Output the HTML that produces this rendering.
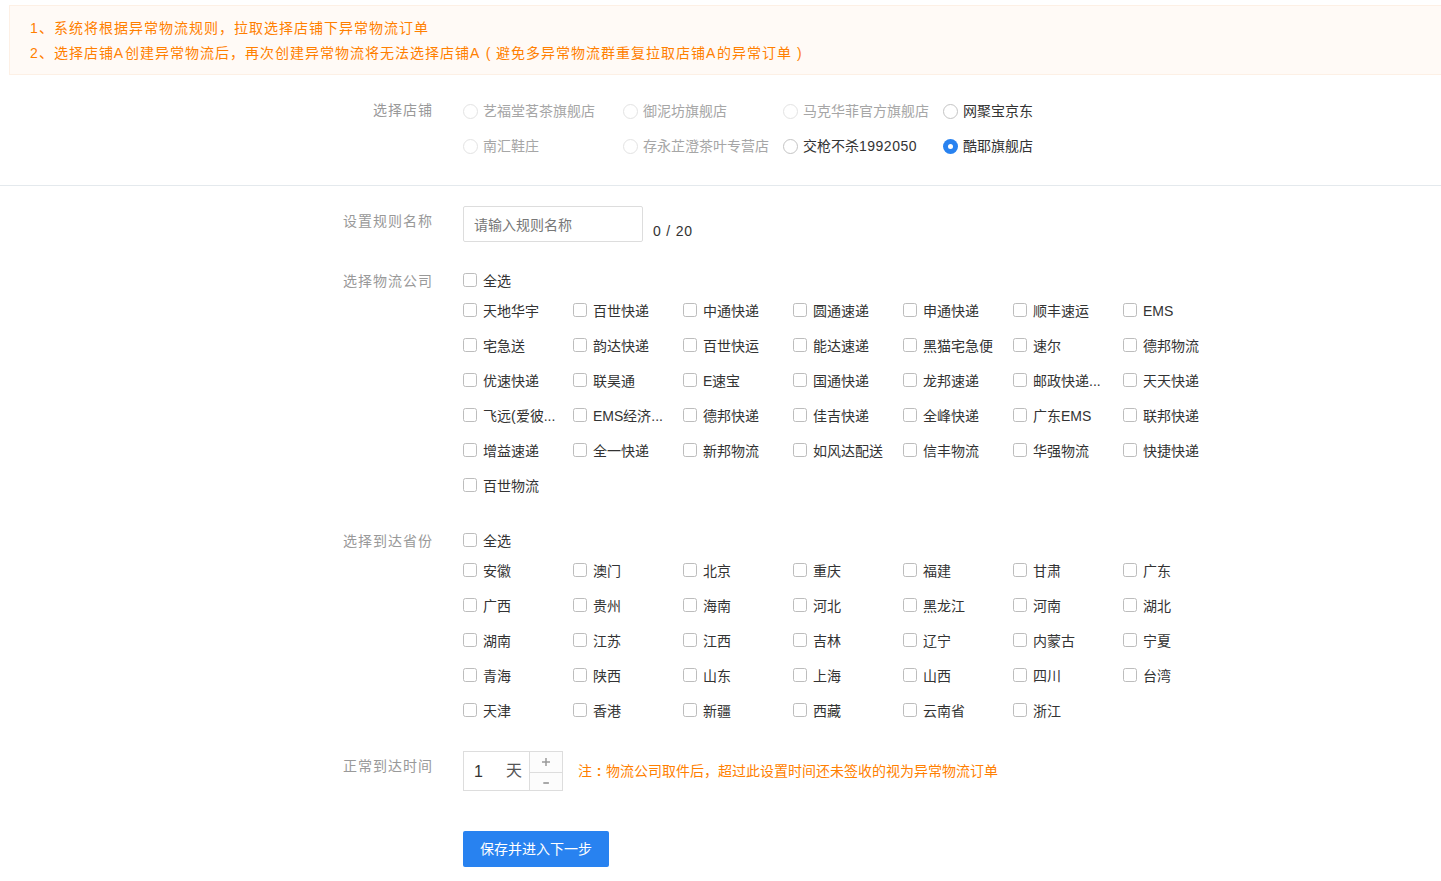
<!DOCTYPE html>
<html lang="zh-CN">
<head>
<meta charset="utf-8">
<title>异常物流规则</title>
<style>
html,body{margin:0;padding:0;}
body{width:1441px;height:881px;position:relative;overflow:hidden;background:#fff;
 font-family:"Liberation Sans",sans-serif;font-size:14px;color:#333;}
.abs{position:absolute;white-space:nowrap;}
.tip{position:absolute;left:9px;top:5px;width:1440px;height:68px;border:1px solid #fdf0e5;background:#fffaf6;}
.tip div{position:absolute;left:20px;height:25px;line-height:25px;letter-spacing:1px;color:#ff7f00;white-space:nowrap;}
.tip u{text-decoration:none;letter-spacing:1.8px;}
.tip b{display:inline-block;width:14px;text-align:center;font-weight:normal;letter-spacing:0;margin-right:1px;}
.hr{position:absolute;left:0;top:185px;width:1441px;height:1px;background:#e4e9ed;}
.lab{position:absolute;left:233px;width:200px;letter-spacing:1px;text-align:right;height:20px;line-height:20px;color:#999;white-space:nowrap;}
.it{position:absolute;height:20px;line-height:20px;white-space:nowrap;}
.it input{-webkit-appearance:none;appearance:none;outline:none;margin:0;padding:0;display:block;position:absolute;left:0;top:2px;width:14px;height:14px;box-sizing:border-box;border:1px solid #bdbdbd;border-radius:2.5px;background:#fff;}
.it span{position:absolute;left:20px;top:0px;}
.rd input{top:3px;width:15px;height:15px;border-radius:50%;border-color:#c4c4c4;}
.rd.dis input{border-color:#e3e3e3;}
.rd.dis span{color:#a6a6a6;}
.rd.on input{border:none;background:#2882f0;}
.rd.on small{display:block;position:absolute;left:5px;top:8px;width:5px;height:5px;border-radius:50%;background:#fff;}
.inp{position:absolute;left:463px;top:206px;width:180px;height:36px;box-sizing:border-box;border:1px solid #ddd;border-radius:2px;background:#fff;margin:0;padding:8px 10px 6px 10px;outline:none;font-family:"Liberation Sans",sans-serif;font-size:14px;line-height:20px;color:#333;-webkit-appearance:none;appearance:none;}
.inp::placeholder{color:#777;opacity:1;}
.step{position:absolute;left:463px;top:751px;width:100px;height:40px;box-sizing:border-box;border:1px solid #ddd;background:#fff;}
.step .n{position:absolute;left:10px;top:10px;font-size:16px;line-height:20px;color:#333;}
.step .u{position:absolute;left:42px;top:9px;font-size:16px;line-height:20px;color:#555;}
.step .b{position:absolute;left:65px;width:32px;background:#fcfcfc;border-left:1px solid #ddd;color:#999;text-align:center;}
.step .b1{top:0;height:20px;border-bottom:1px solid #ddd;}
.step .b2{top:21px;height:17px;}
.step svg{position:absolute;left:0;top:0;}
.note{position:absolute;left:578px;top:761px;height:20px;line-height:20px;color:#ff7f00;white-space:nowrap;}
.note b{display:inline-block;width:14px;text-align:center;font-weight:bold;}
.it em{font-style:normal;letter-spacing:0.5px;}
.btn{position:absolute;left:463px;top:831px;width:146px;height:36px;box-sizing:border-box;margin:0;padding:0;border:none;outline:none;border-radius:2px;background:#2882f0;color:#fff;text-align:center;font-family:"Liberation Sans",sans-serif;font-size:14px;line-height:37px;-webkit-appearance:none;appearance:none;display:block;}
</style>
</head>
<body>
<div class="tip"><div style="top:10px">1、系统将根据异常物流规则，拉取选择店铺下异常物流订单</div><div style="top:35px">2、选择店铺<u>A</u>创建异常物流后，再次创建异常物流将无法选择店铺<u>A</u><b>(</b>避免多异常物流群重复拉取店铺<u>A</u>的异常订单<b>)</b></div></div>

<div class="lab" style="top:100px">选择店铺</div>
<label class="it rd dis" style="left:463px;top:101px"><input type="radio" name="shop" disabled><span>艺福堂茗茶旗舰店</span></label>
<label class="it rd dis" style="left:623px;top:101px"><input type="radio" name="shop" disabled><span>御泥坊旗舰店</span></label>
<label class="it rd dis" style="left:783px;top:101px"><input type="radio" name="shop" disabled><span>马克华菲官方旗舰店</span></label>
<label class="it rd" style="left:943px;top:101px"><input type="radio" name="shop"><span>网聚宝京东</span></label>
<label class="it rd dis" style="left:463px;top:136px"><input type="radio" name="shop" disabled><span>南汇鞋庄</span></label>
<label class="it rd dis" style="left:623px;top:136px"><input type="radio" name="shop" disabled><span>存永芷澄茶叶专营店</span></label>
<label class="it rd" style="left:783px;top:136px"><input type="radio" name="shop"><span>交枪不杀<em>1992050</em></span></label>
<label class="it rd on" style="left:943px;top:136px"><input type="radio" name="shop" checked><small></small><span>酷耶旗舰店</span></label>
<div class="hr"></div>
<div class="lab" style="top:211px">设置规则名称</div>
<input class="inp" type="text" maxlength="20" placeholder="请输入规则名称">
<div class="abs" style="left:653px;top:221px;line-height:20px;letter-spacing:0.8px;color:#333">0 / 20</div>
<div class="lab" style="top:271px">选择物流公司</div>
<label class="it" style="left:463px;top:271px"><input type="checkbox" name="logi_all"><span>全选</span></label>
<label class="it" style="left:463px;top:301px"><input type="checkbox" name="logi"><span>天地华宇</span></label>
<label class="it" style="left:573px;top:301px"><input type="checkbox" name="logi"><span>百世快递</span></label>
<label class="it" style="left:683px;top:301px"><input type="checkbox" name="logi"><span>中通快递</span></label>
<label class="it" style="left:793px;top:301px"><input type="checkbox" name="logi"><span>圆通速递</span></label>
<label class="it" style="left:903px;top:301px"><input type="checkbox" name="logi"><span>申通快递</span></label>
<label class="it" style="left:1013px;top:301px"><input type="checkbox" name="logi"><span>顺丰速运</span></label>
<label class="it" style="left:1123px;top:301px"><input type="checkbox" name="logi"><span>EMS</span></label>
<label class="it" style="left:463px;top:336px"><input type="checkbox" name="logi"><span>宅急送</span></label>
<label class="it" style="left:573px;top:336px"><input type="checkbox" name="logi"><span>韵达快递</span></label>
<label class="it" style="left:683px;top:336px"><input type="checkbox" name="logi"><span>百世快运</span></label>
<label class="it" style="left:793px;top:336px"><input type="checkbox" name="logi"><span>能达速递</span></label>
<label class="it" style="left:903px;top:336px"><input type="checkbox" name="logi"><span>黑猫宅急便</span></label>
<label class="it" style="left:1013px;top:336px"><input type="checkbox" name="logi"><span>速尔</span></label>
<label class="it" style="left:1123px;top:336px"><input type="checkbox" name="logi"><span>德邦物流</span></label>
<label class="it" style="left:463px;top:371px"><input type="checkbox" name="logi"><span>优速快递</span></label>
<label class="it" style="left:573px;top:371px"><input type="checkbox" name="logi"><span>联昊通</span></label>
<label class="it" style="left:683px;top:371px"><input type="checkbox" name="logi"><span>E速宝</span></label>
<label class="it" style="left:793px;top:371px"><input type="checkbox" name="logi"><span>国通快递</span></label>
<label class="it" style="left:903px;top:371px"><input type="checkbox" name="logi"><span>龙邦速递</span></label>
<label class="it" style="left:1013px;top:371px"><input type="checkbox" name="logi"><span>邮政快递...</span></label>
<label class="it" style="left:1123px;top:371px"><input type="checkbox" name="logi"><span>天天快递</span></label>
<label class="it" style="left:463px;top:406px"><input type="checkbox" name="logi"><span>飞远(爱彼...</span></label>
<label class="it" style="left:573px;top:406px"><input type="checkbox" name="logi"><span>EMS经济...</span></label>
<label class="it" style="left:683px;top:406px"><input type="checkbox" name="logi"><span>德邦快递</span></label>
<label class="it" style="left:793px;top:406px"><input type="checkbox" name="logi"><span>佳吉快递</span></label>
<label class="it" style="left:903px;top:406px"><input type="checkbox" name="logi"><span>全峰快递</span></label>
<label class="it" style="left:1013px;top:406px"><input type="checkbox" name="logi"><span>广东EMS</span></label>
<label class="it" style="left:1123px;top:406px"><input type="checkbox" name="logi"><span>联邦快递</span></label>
<label class="it" style="left:463px;top:441px"><input type="checkbox" name="logi"><span>增益速递</span></label>
<label class="it" style="left:573px;top:441px"><input type="checkbox" name="logi"><span>全一快递</span></label>
<label class="it" style="left:683px;top:441px"><input type="checkbox" name="logi"><span>新邦物流</span></label>
<label class="it" style="left:793px;top:441px"><input type="checkbox" name="logi"><span>如风达配送</span></label>
<label class="it" style="left:903px;top:441px"><input type="checkbox" name="logi"><span>信丰物流</span></label>
<label class="it" style="left:1013px;top:441px"><input type="checkbox" name="logi"><span>华强物流</span></label>
<label class="it" style="left:1123px;top:441px"><input type="checkbox" name="logi"><span>快捷快递</span></label>
<label class="it" style="left:463px;top:476px"><input type="checkbox" name="logi"><span>百世物流</span></label>
<div class="lab" style="top:531px">选择到达省份</div>
<label class="it" style="left:463px;top:531px"><input type="checkbox" name="prov_all"><span>全选</span></label>
<label class="it" style="left:463px;top:561px"><input type="checkbox" name="prov"><span>安徽</span></label>
<label class="it" style="left:573px;top:561px"><input type="checkbox" name="prov"><span>澳门</span></label>
<label class="it" style="left:683px;top:561px"><input type="checkbox" name="prov"><span>北京</span></label>
<label class="it" style="left:793px;top:561px"><input type="checkbox" name="prov"><span>重庆</span></label>
<label class="it" style="left:903px;top:561px"><input type="checkbox" name="prov"><span>福建</span></label>
<label class="it" style="left:1013px;top:561px"><input type="checkbox" name="prov"><span>甘肃</span></label>
<label class="it" style="left:1123px;top:561px"><input type="checkbox" name="prov"><span>广东</span></label>
<label class="it" style="left:463px;top:596px"><input type="checkbox" name="prov"><span>广西</span></label>
<label class="it" style="left:573px;top:596px"><input type="checkbox" name="prov"><span>贵州</span></label>
<label class="it" style="left:683px;top:596px"><input type="checkbox" name="prov"><span>海南</span></label>
<label class="it" style="left:793px;top:596px"><input type="checkbox" name="prov"><span>河北</span></label>
<label class="it" style="left:903px;top:596px"><input type="checkbox" name="prov"><span>黑龙江</span></label>
<label class="it" style="left:1013px;top:596px"><input type="checkbox" name="prov"><span>河南</span></label>
<label class="it" style="left:1123px;top:596px"><input type="checkbox" name="prov"><span>湖北</span></label>
<label class="it" style="left:463px;top:631px"><input type="checkbox" name="prov"><span>湖南</span></label>
<label class="it" style="left:573px;top:631px"><input type="checkbox" name="prov"><span>江苏</span></label>
<label class="it" style="left:683px;top:631px"><input type="checkbox" name="prov"><span>江西</span></label>
<label class="it" style="left:793px;top:631px"><input type="checkbox" name="prov"><span>吉林</span></label>
<label class="it" style="left:903px;top:631px"><input type="checkbox" name="prov"><span>辽宁</span></label>
<label class="it" style="left:1013px;top:631px"><input type="checkbox" name="prov"><span>内蒙古</span></label>
<label class="it" style="left:1123px;top:631px"><input type="checkbox" name="prov"><span>宁夏</span></label>
<label class="it" style="left:463px;top:666px"><input type="checkbox" name="prov"><span>青海</span></label>
<label class="it" style="left:573px;top:666px"><input type="checkbox" name="prov"><span>陕西</span></label>
<label class="it" style="left:683px;top:666px"><input type="checkbox" name="prov"><span>山东</span></label>
<label class="it" style="left:793px;top:666px"><input type="checkbox" name="prov"><span>上海</span></label>
<label class="it" style="left:903px;top:666px"><input type="checkbox" name="prov"><span>山西</span></label>
<label class="it" style="left:1013px;top:666px"><input type="checkbox" name="prov"><span>四川</span></label>
<label class="it" style="left:1123px;top:666px"><input type="checkbox" name="prov"><span>台湾</span></label>
<label class="it" style="left:463px;top:701px"><input type="checkbox" name="prov"><span>天津</span></label>
<label class="it" style="left:573px;top:701px"><input type="checkbox" name="prov"><span>香港</span></label>
<label class="it" style="left:683px;top:701px"><input type="checkbox" name="prov"><span>新疆</span></label>
<label class="it" style="left:793px;top:701px"><input type="checkbox" name="prov"><span>西藏</span></label>
<label class="it" style="left:903px;top:701px"><input type="checkbox" name="prov"><span>云南省</span></label>
<label class="it" style="left:1013px;top:701px"><input type="checkbox" name="prov"><span>浙江</span></label>
<div class="lab" style="top:756px">正常到达时间</div>
<div class="step"><span class="n">1</span><span class="u">天</span>
<div class="b b1"><svg width="32" height="20" viewBox="0 0 32 20"><path d="M12 10H20M16 6V14" stroke="#999" stroke-width="1.5" fill="none"/></svg></div>
<div class="b b2"><svg width="32" height="17" viewBox="0 0 32 17"><path d="M13.300 10H18.900" stroke="#999" stroke-width="1.7" fill="none"/></svg></div>
</div>
<div class="note">注<b>:</b>物流公司取件后，超过此设置时间还未签收的视为异常物流订单</div>
<button class="btn" type="button">保存并进入下一步</button>
</body>
</html>
